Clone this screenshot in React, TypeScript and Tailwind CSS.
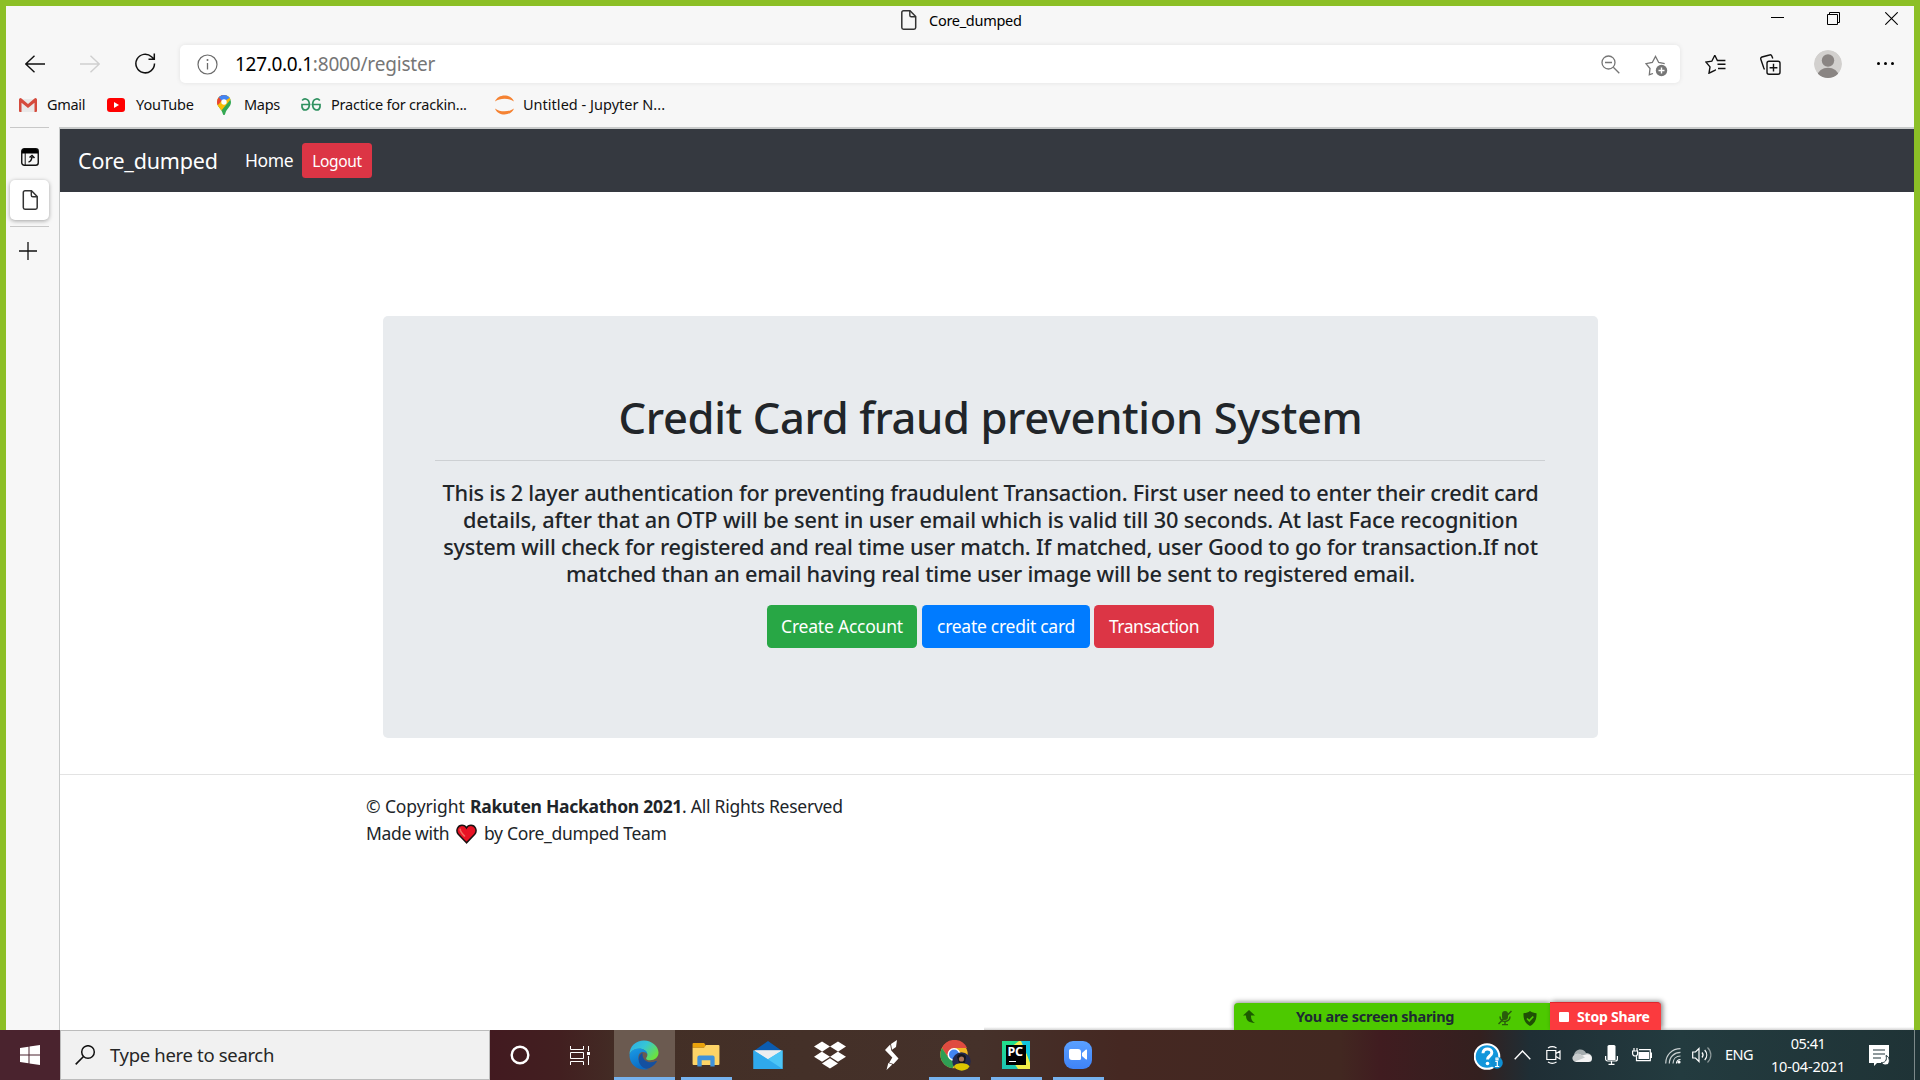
import { ReactNode } from "react";
import { FaDropbox } from "react-icons/fa";

function Svg({ w, h, box, className, children }: { w: number; h: number; box?: string; className?: string; children: ReactNode }) {
  return (
    <svg width={w} height={h} viewBox={box ?? `0 0 ${w} ${h}`} fill="none" className={`block shrink-0 ${className ?? ""}`}>
      {children}
    </svg>
  );
}

function PageIcon({ w, h }: { w: number; h: number }) {
  return (
    <Svg w={w} h={h} box="0 0 16 20">
      <path d="M3 .8h6.500L15.200 6.500V17.500a1.700 1.700 0 0 1-1.700 1.700H3a1.700 1.700 0 0 1-1.700-1.700v-15A1.700 1.700 0 0 1 3 .8Z" stroke="#333" strokeWidth="1.500" />
      <path d="M9.300 1v4.200a1.500 1.500 0 0 0 1.500 1.500H15" stroke="#333" strokeWidth="1.400" />
    </Svg>
  );
}

function TitleBar() {
  return (
    <div className="flex h-[39px] items-start">
      <div className="ml-[894px] mt-1 flex items-center">
        <PageIcon w={17} h={20} />
        <span className="ml-3 -mt-px text-[14.5px] leading-5 tracking-[-0.28px] text-black">Core_dumped</span>
      </div>
      <div className="ml-auto mr-4 mt-[6px] flex items-start">
        <div className="mt-[5px] h-px w-[13px] bg-black" />
        <Svg w={13} h={13} className="ml-[43px]">
          <path d="M.5 2.500h10v10H.5zM2.500 2.500V.5h10v10h-2" stroke="#000" />
        </Svg>
        <Svg w={13} h={13} className="ml-[45px]">
          <path d="M.3.3 12.700 12.700M12.700.3.3 12.700" stroke="#000" strokeWidth="1.100" />
        </Svg>
      </div>
    </div>
  );
}

function AddressRow() {
  return (
    <div className="flex h-[38px] items-center">
      <Svg w={20} h={18} className="-mt-px ml-[19px]">
        <path d="M9.500.8.800 9l8.700 8.200M.8 9H20" stroke="#111" strokeWidth="1.400" />
      </Svg>
      <Svg w={20} h={18} className="-mt-px ml-[35px]">
        <path d="m10.500.8 8.700 8.200-8.700 8.200M19.200 9H0" stroke="#cfcfcf" strokeWidth="1.400" />
      </Svg>
      <Svg w={21} h={21} className="-mt-px ml-[35px]">
        <path d="M19.500 10.500a9.300 9.300 0 1 1-3-6.800L19 6M19.300.5v5.800h-5.800" stroke="#111" strokeWidth="1.500" />
      </Svg>
      <div className="ml-6 flex h-[38px] w-[1500px] items-center rounded-[5px] bg-white shadow-[0_0_5px_rgba(0,0,0,0.09)]">
        <Svg w={21} h={21} className="ml-[17px]">
          <circle cx="10.500" cy="10.500" r="9.500" stroke="#6b6b6b" strokeWidth="1.200" />
          <path d="M10.500 9v6.500" stroke="#6b6b6b" strokeWidth="1.300" />
          <circle cx="10.500" cy="6" r="1" fill="#6b6b6b" />
        </Svg>
        <div className="ml-[17px] text-[19px] leading-6">
          <span className="tracking-[-0.3px] text-black">127.0.0.1</span>
          <span className="tracking-[-0.18px] text-[#767676]">:8000/register</span>
        </div>
        <Svg w={19} h={19} className="ml-auto">
          <circle cx="7.500" cy="7.500" r="6.500" stroke="#767676" strokeWidth="1.300" />
          <path d="m12.300 12.300 6 6M4 7.500h7" stroke="#767676" strokeWidth="1.300" />
        </Svg>
        <Svg w={23} h={22} className="ml-[25px] mr-3 mt-1">
          <path d="M8 18.500 4.300 19.700 5 13.500 1 8.700 7.300 7.500 10.500 1.500l3.200 6 6 1.200" stroke="#767676" strokeWidth="1.300" />
          <circle cx="16.500" cy="15.500" r="5.700" fill="#767676" />
          <path d="M16.500 12.500v6M13.500 15.500h6" stroke="#fff" strokeWidth="1.400" />
        </Svg>
      </div>
      <Svg w={21} h={20} className="ml-[25px]">
        <path d="m9.800 1.200-3 6-5.800.9 4 4.800-1 6.300 5.800-2.900 1-.6M9.800 1.200l2.600 5.300h8M12.500 10.300h8M13 14.500h7.500" stroke="#111" strokeWidth="1.400" />
      </Svg>
      <Svg w={21} h={21} className="ml-[34px]">
        <rect x="7" y="7.200" width="13" height="13" rx="2" stroke="#111" strokeWidth="1.400" />
        <path d="M13.500 9.800v7.800M9.600 13.700h7.800M4.500 15.500 3.800 14 .8 5.300A1.800 1.800 0 0 1 2 3L9.500 1a1.800 1.800 0 0 1 2.300 1l1 2.500" stroke="#111" strokeWidth="1.400" />
      </Svg>
      <Svg w={28} h={28} className="ml-[33px]">
        <clipPath id="avatar"><circle cx="14" cy="14" r="14" /></clipPath>
        <g clipPath="url(#avatar)">
          <circle cx="14" cy="14" r="14" fill="#d2d0ce" />
          <circle cx="14" cy="10.500" r="6.200" fill="#8a8583" />
          <ellipse cx="14" cy="25.500" rx="10.300" ry="7.800" fill="#8a8583" />
        </g>
      </Svg>
      <div className="-mt-px ml-[35px] flex gap-1">
        <i className="size-[3px] rounded-full bg-black" />
        <i className="size-[3px] rounded-full bg-black" />
        <i className="size-[3px] rounded-full bg-black" />
      </div>
    </div>
  );
}

function BookmarkBar() {
  return (
    <div className="flex h-11 items-center pb-px text-[14.5px] text-[#111]">
      <Svg w={18} h={14} className="ml-[13px]">
        <path d="M2 1h14v13H2z" fill="#e9e9e9" />
        <path d="M0 1.500A1.500 1.500 0 0 1 2.500.5L9 6 15.500.5A1.500 1.500 0 0 1 18 1.500V13a1 1 0 0 1-1 1h-1.500V4.800L9 10 2.500 4.800V14H1a1 1 0 0 1-1-1Z" fill="#d54b3d" />
      </Svg>
      <span className="ml-[10px] w-[60px] tracking-[-0.3px]">Gmail</span>
      <Svg w={18} h={14}>
        <rect width="18" height="14" rx="3" fill="#f00" />
        <path d="m7 4 5 3-5 3Z" fill="#fff" />
      </Svg>
      <span className="ml-[11px] w-[81px] tracking-[-0.1px]">YouTube</span>
      <Svg w={14} h={20} className="mt-px">
        <clipPath id="pin"><path d="M7 0a7 7 0 0 1 7 7c0 5-4.500 6.500-5.700 11.500-.5 2-2.100 2-2.600 0C4.500 13.500 0 12 0 7a7 7 0 0 1 7-7Z" /></clipPath>
        <g clipPath="url(#pin)">
          <path d="M0 0h14v20H0z" fill="#34a853" />
          <path d="M0 0h14v4L4 16 0 12Z" fill="#fbbc04" />
          <path d="M0 0h9L1.500 9.500 0 10Z" fill="#ea4335" />
          <path d="M1.500 2 6 7l8-5V0H2Z" fill="#4285f4" />
        </g>
        <circle cx="7" cy="7" r="2.700" fill="#fff" />
      </Svg>
      <span className="ml-[13px] w-[57px] tracking-[-0.3px]">Maps</span>
      <Svg w={20} h={13}>
        <path d="M1.200 2.500C3 .2 8.300 0 8.300 6.500c0 6.500-6.300 7-7.300 2.500V6.500h8.500M18.800 2.500C17 .2 11.700 0 11.700 6.500c0 6.500 6.300 7 7.300 2.500V6.500h-8.500" stroke="#2f9160" strokeWidth="1.700" />
      </Svg>
      <span className="ml-[10px] w-[164px] tracking-[-0.22px]">Practice for crackin...</span>
      <Svg w={19} h={20}>
        <path d="M0 6.500C3-1.500 16-1.500 19 6.500 14 2.700 5 2.700 0 6.500ZM0 13.500c3 8 16 8 19 0-5 3.800-14 3.800-19 0Z" fill="#f58232" />
      </Svg>
      <span className="ml-[9px] tracking-[0.02px]">Untitled - Jupyter N...</span>
    </div>
  );
}

function TabStrip() {
  return (
    <aside className="flex w-[53px] flex-col items-start bg-[#f7f7f7] pl-1">
      <div className="h-px w-[39px] bg-[#c8c8c8]" />
      <Svg w={18} h={18} className="ml-[11px] mt-5">
        <rect x=".75" y=".75" width="16.500" height="16.500" rx="2.500" stroke="#111" strokeWidth="1.400" />
        <path d="M1 3a2 2 0 0 1 2-2h12a2 2 0 0 1 2 2v2.500H1Z" fill="#000" />
        <path d="M4.200 5v12" stroke="#111" />
        <path d="M7.500 14c1.800-.3 3-1.500 3.500-5M8.500 9.500 11 7.500l2.500 2.500" stroke="#111" strokeWidth="1.600" />
      </Svg>
      <div className="mt-[14px] flex h-10 w-[39px] items-center justify-center rounded-[5px] bg-white pl-px shadow-[0_1px_4px_rgba(0,0,0,0.35)]">
        <PageIcon w={16} h={20} />
      </div>
      <div className="mt-[6px] h-px w-[39px] bg-[#c8c8c8]" />
      <Svg w={18} h={18} className="ml-[9px] mt-[15px]">
        <path d="M9 0v18M0 9h18" stroke="#111" strokeWidth="1.300" />
      </Svg>
    </aside>
  );
}

function WebPage() {
  return (
    <div className="flex min-w-0 flex-1 flex-col border-l border-t-2 border-[#c9cbcb] bg-white text-[#212529]">
      <nav className="flex h-[63px] shrink-0 items-center bg-[#353940] text-white">
        <span className="ml-[18px] mt-px w-[140px] text-[21.5px] tracking-[-0.2px]">Core_dumped</span>
        <span className="ml-[27px] w-[48px] text-[17.5px] tracking-[-0.35px]">Home</span>
        <button className="ml-[9px] h-[35px] w-[70px] rounded-[3.500px] bg-[#dc3545] pt-[2px] text-[15.5px] tracking-[-0.35px]">Logout</button>
      </nav>
      <section className="ml-[323px] mt-[124px] h-[422px] w-[1215px] shrink-0 rounded-[5px] bg-[#e8ebee] px-[52px] pt-[74px] text-center font-medium">
        <h1 className="text-[43.5px] leading-[54px] tracking-[-0.37px]">Credit Card fraud prevention System</h1>
        <hr className="mb-[18px] mr-px mt-4 border-[#cdd0d3]" />
        <div className="whitespace-nowrap text-[21.75px] leading-[27px] tracking-[-0.23px]">
          <p>This is 2 layer authentication for preventing fraudulent Transaction. First user need to enter their credit card</p>
          <p className="tracking-[-0.16px]">details, after that an OTP will be sent in user email which is valid till 30 seconds. At last Face recognition</p>
          <p>system will check for registered and real time user match. If matched, user Good to go for transaction.If not</p>
          <p>matched than an email having real time user image will be sent to registered email.</p>
        </div>
        <div className="mt-[18px] flex justify-center text-[17.5px] font-normal text-white">
          <button className="h-[43px] w-[150px] rounded-[4.500px] bg-[#28a745] tracking-[-0.22px]">Create Account</button>
          <button className="ml-[5px] h-[43px] w-[168px] rounded-[4.500px] bg-[#007bff] tracking-[-0.27px]">create credit card</button>
          <button className="ml-1 h-[43px] w-[120px] rounded-[4.500px] bg-[#dc3545] tracking-[-0.45px]">Transaction</button>
        </div>
      </section>
      <hr className="mt-9 border-[#e3e3e3]" />
      <footer className="ml-[306px] mt-[18px] whitespace-nowrap text-[17.5px] leading-[27px]">
        <div className="flex">
          <span className="w-[104px] tracking-[-0.1px]">© Copyright</span>
          <strong className="w-[212px] tracking-[-0.28px]">Rakuten Hackathon 2021</strong>
          <span className="tracking-[-0.25px]">. All Rights Reserved</span>
        </div>
        <div className="flex items-center">
          <span className="w-[90px] tracking-[-0.35px]">Made with</span>
          <Svg w={21} h={20}>
            <path d="M10.500 18.800 2.300 10.300C-.8 6.300 2 1.200 6 1.200c2 0 3.600 1 4.500 2.700C11.400 2.200 13 1.200 15 1.200c4 0 6.800 5.100 3.700 9.100Z" fill="#e81224" stroke="#1b1111" strokeWidth="1.500" />
            <path d="M4.200 5.200c-.3 2.400 2.200 4.700 4.300 6.800" stroke="#f2695e" strokeWidth="1.600" strokeLinecap="round" />
          </Svg>
          <span className="ml-[7px] tracking-[-0.31px]">by Core_dumped Team</span>
        </div>
      </footer>
      <div className="ml-auto mt-auto h-[3px] w-[930px] bg-linear-to-b from-transparent to-[#d2d2d2]" />
    </div>
  );
}

function ShareBar() {
  return (
    <div className="absolute left-[1234px] top-[1002px] flex h-7 w-[427px] items-end text-[14.5px] font-bold">
      <div className="flex h-[27px] w-[316px] items-center rounded-tl-[4px] bg-[#4dc900] text-[#1d2a33] shadow-[0_-1px_5px_rgba(0,0,0,0.45)]">
        <Svg w={13} h={13} className="ml-[9px]">
          <path d="M6 0 0 5.500h3c0 4.500 2 7 9 7.500-3-1.500-4-3.500-4-7.500h4Z" fill="#1c5a00" />
        </Svg>
        <span className="ml-10 w-[160px] tracking-[-0.27px]">You are screen sharing</span>
        <Svg w={14} h={16} className="ml-[42px] mt-[3px]">
          <path d="M4 4a3 3 0 0 1 6 0v3a3 3 0 0 1-6 0ZM6.300 11h1.400v3H10v1.200H4V14h2.300Z" fill="#2a5c0c" />
          <path d="M2 6.500C2 13 12 13 12 6.500M13.500 1 .5 14" stroke="#2a5c0c" strokeWidth="1.500" />
        </Svg>
        <Svg w={14} h={15} className="ml-[11px] mt-[3px]">
          <path d="M7 0c2 1.500 4 2 6.500 2.200C13.800 8 12 12.500 7 15 2 12.500.2 8 .5 2.200 3 2 5 1.500 7 0Z" fill="#1f5005" />
          <path d="m4 7.500 2.300 2.300L10.300 5.500" stroke="#4dc900" strokeWidth="1.700" />
        </Svg>
      </div>
      <div className="flex h-7 w-[111px] items-center rounded-tr-[4px] border-t border-[#e0242c] bg-[#fb3a3e] text-white shadow-[2px_-1px_5px_rgba(0,0,0,0.45)]">
        <div className="ml-[9px] size-[10px] rounded-[1px] bg-white" />
        <span className="ml-2 text-[14px] tracking-[-0.2px]">Stop Share</span>
      </div>
    </div>
  );
}

function AppSlot({ width, left, running, active, children }: { width: string; left: string; running?: boolean; active?: boolean; children: ReactNode }) {
  return (
    <div className={`relative flex h-full items-center justify-center pr-px ${width} ${left} ${active ? "bg-[#6b5a50]" : ""}`}>
      {children}
      {running && <div className="absolute inset-x-0 bottom-0 h-[3px] bg-[#76b2ee]" />}
    </div>
  );
}

function Taskbar() {
  return (
    <div className="relative z-10 flex h-[50px] shrink-0 items-center bg-[linear-gradient(90deg,#4a232e_0px,#4a232e_60px,#421a20_490px,#421f20_560px,#432f26_630px,#45312a_980px,#452822_1120px,#422821_1340px,#401c20_1380px,#33201f_1480px,#1f2e35_1530px,#233b3f_1680px,#1f3336_1920px)] text-white">
      <div className="flex w-[60px] justify-center">
        <Svg w={20} h={20}>
          <path d="M0 3 8.500 1.700V9.500H0ZM9.500 1.500 20 0v9.500H9.500ZM0 10.500h8.500v7.800L0 17ZM9.500 10.500H20V20L9.500 18.500Z" fill="#fff" />
        </Svg>
      </div>
      <div className="flex h-[50px] w-[430px] items-center border border-[#bcbcbc] bg-[#f1f1f1] text-[#262626]">
        <Svg w={21} h={20} className="ml-[14px]">
          <circle cx="13" cy="7" r="6.300" stroke="#111" strokeWidth="1.500" />
          <path d="M8.500 11.500.7 19.400" stroke="#111" strokeWidth="1.600" />
        </Svg>
        <span className="ml-[14px] text-[18.5px] tracking-[-0.33px]">Type here to search</span>
      </div>
      <Svg w={20} h={20} className="ml-5">
        <circle cx="10" cy="10" r="8.300" stroke="#fff" strokeWidth="2.400" />
      </Svg>
      <Svg w={20} h={19} className="ml-10">
        <path d="M.5 0v3.500h13V0M.5 19v-3.500h13V19M.5 6.500h13v6H.5zM18.500 0v5M18.500 10v9" stroke="#fff" />
        <path d="M17 6h3v3h-3z" fill="#fff" />
      </Svg>

      <AppSlot width="w-[61px]" left="ml-6" running active>
        <Svg w={30} h={30} box="0 0 30 31">
          <defs>
            <linearGradient id="edgeTop" x1="0" y1="0" x2="1" y2=".6"><stop stopColor="#2ba9e8" /><stop offset=".5" stopColor="#36c5d6" /><stop offset="1" stopColor="#6be33f" /></linearGradient>
            <linearGradient id="edgeSide" x1="0" y1="0" x2=".4" y2="1"><stop stopColor="#1a9be6" /><stop offset="1" stopColor="#0a6cc4" /></linearGradient>
          </defs>
          <path d="M0 15C0 6 7 .5 15 .5S30 6.500 30 13c0 5-4 8-8.500 8-3 0-4.300-1-4.300-2 0-.8 1.500-1.500 1.300-4C18 11 14 9 10 9 5 9 1 12 0 15Z" fill="url(#edgeTop)" />
          <path d="M0 15.500C1 11.500 5 8.800 10 8.800c4.500 0 8.500 2.500 8.500 6.200-1-1.800-2.500-2.500-4.500-2.500-4 0-6 4-4 9s6 8.500 10 8.500C9 32.500 0 26 0 15.500Z" fill="url(#edgeSide)" />
          <path d="M13.500 13C8 16.500 8 24 14 28.500c4 3 10 0 14.200-6 .2-.8-.3-1-1-.7C20.500 25 12.500 22 13.500 13Z" fill="#1450a0" />
        </Svg>
      </AppSlot>
      <AppSlot width="w-[51px]" left="ml-[6px]" running>
        <Svg w={28} h={24} box="0 0 28 25" className="-mt-px">
          <path d="M0 1a1 1 0 0 1 1-1h11l1.500 2v3H0Z" fill="#e9a20c" />
          <path d="M0 5h12l2-3h13a1 1 0 0 1 1 1v19a1 1 0 0 1-1 1H1a1 1 0 0 1-1-1Z" fill="#fdd467" />
          <path d="M5 24.500V15a2 2 0 0 1 2-2h14a2 2 0 0 1 2 2v9.500h-4.500V18h-9v6.500Z" fill="#3f92db" />
        </Svg>
      </AppSlot>
      <AppSlot width="w-[51px]" left="ml-[11px]">
        <Svg w={30} h={28} box="0 0 30 29">
          <path d="M0 10.500 15 0l15 10.500V20H0Z" fill="#0b5cb0" />
          <path d="M1 9.500h28V20H1Z" fill="#eceef0" />
          <path d="M0 9.500 15 19 30 9.500V29H0Z" fill="#3db6f2" />
          <path d="M15 19 30 29V9.500Z" fill="#4cc5f6" />
          <path d="M0 9.500 30 29H0Z" fill="#2fa9ec" />
        </Svg>
      </AppSlot>
      <AppSlot width="w-[51px]" left="ml-[11px]">
        <FaDropbox size={32} />
      </AppSlot>
      <AppSlot width="w-[51px]" left="ml-[11px]">
        <Svg w={14} h={30} className="-mt-px mr-px">
          <path d="M12 0 11 7 7 9.800 6 4ZM5.200 4.500 6.300 10.500 13.500 18.500 8.500 24 4.200 22.700 7.300 17.500 0 10ZM1.500 30 3.300 23l4 1.500Z" fill="#fff" />
        </Svg>
      </AppSlot>
      <AppSlot width="w-[51px]" left="ml-[11px]" running>
        <Svg w={31} h={31} className="ml-[2px]">
          <circle cx="14" cy="14.500" r="13.700" fill="#f0b724" />
          <path d="M14 8H27A13.700 13.700 0 0 0 2 8l6 9Z" fill="#df4b40" />
          <path d="M8 17 2 8a13.700 13.700 0 0 0 10.500 20.200L17 20Z" fill="#2f9e54" />
          <circle cx="14" cy="14.500" r="6.500" fill="#fff" />
          <circle cx="14" cy="14.500" r="5" fill="#4285f4" />
          <circle cx="21.500" cy="21.500" r="9.200" fill="#23284e" />
          <path d="M17 17c1-4 8-4 9 0l-1 6h-6Z" fill="#14151d" />
          <circle cx="21.500" cy="19" r="2.600" fill="#a8735a" />
          <path d="M14 26.500c1-4.500 14-4.500 15.500 0a9.200 9.200 0 0 1-15.500 0Z" fill="#dcc400" />
        </Svg>
      </AppSlot>
      <AppSlot width="w-[51px]" left="ml-[11px]" running>
        <div className="relative size-7">
          <Svg w={28} h={28}>
            <defs>
              <linearGradient id="pycharm" x1="0" y1="0" x2="0" y2="1"><stop stopColor="#22e08a" /><stop offset="1" stopColor="#1cc3b4" /></linearGradient>
            </defs>
            <path d="M0 0h28v28H0z" fill="url(#pycharm)" />
            <path d="M9 6 17 0h3l8 22v6H16l-4-6Z" fill="#f0ee4a" />
            <path d="M19 0h9v20Z" fill="#0fc3dd" />
          </Svg>
          <div className="absolute left-1 top-1 flex size-5 flex-col bg-black pl-[1.500px]">
            <span className="text-[12.5px] font-bold leading-[13px] tracking-[-0.2px] text-white">PC</span>
            <div className="ml-px mt-[3px] h-px w-[7px] bg-white" />
          </div>
        </div>
      </AppSlot>
      <AppSlot width="w-[51px]" left="ml-[11px]" running>
        <div className="-mt-px flex size-7 items-center justify-center rounded-[9px] bg-[linear-gradient(180deg,#5aa0ff,#3f83f8)]">
          <Svg w={18} h={11}>
            <path d="M0 1.500A1.500 1.500 0 0 1 1.500 0H9a3 3 0 0 1 3 3v6.500A1.500 1.500 0 0 1 10.500 11H3a3 3 0 0 1-3-3ZM13 4l4-3.500c.5-.3 1 0 1 .5v9c0 .5-.5.8-1 .5L13 7Z" fill="#fff" />
          </Svg>
        </div>
      </AppSlot>

      <Svg w={29} h={28} className="ml-[370px] mt-1">
        <circle cx="13" cy="13.500" r="12.300" fill="#1296db" stroke="#fff" strokeWidth="2" />
        <path d="M9 10.300c0-6 8.800-5.500 8.800-.6 0 3.300-4.300 3.300-4.300 6.800" stroke="#fff" strokeWidth="3" />
        <circle cx="13.500" cy="20.500" r="1.800" fill="#fff" />
        <circle cx="22.800" cy="19.800" r="6" fill="#0e8fd4" />
        <path d="M21.300 18.500h2v5M21 23.500h4.200M22 15v1.800h2V15Z" stroke="#fff" strokeWidth="1.200" />
      </Svg>
      <Svg w={17} h={10} className="ml-[11px]">
        <path d="M.7 9.200 8.500 1l7.800 8.200" stroke="#fff" strokeWidth="1.400" />
      </Svg>
      <Svg w={15} h={18} className="ml-[15px]">
        <path d="M.8 4.500h9v9h-9zM10 7.500l4-2.500v8l-4-2.500M2 2c2.500-1.600 6-1.600 8.500 0M2 16c2.500 1.600 6 1.600 8.500 0" stroke="#fff" strokeWidth="1.200" />
      </Svg>
      <Svg w={20} h={13} className="ml-[11px]">
        <path d="M2 7C2 3 5 .5 8.500.5 11 .5 13 2 14 4c3 0 6 1.500 6 5H2Z" fill="#a5adaf" />
        <path d="M4 13a4 4 0 0 1-.5-7.500C6 4 8 5 10 6.500L14 5.500c3.500-1 6 1.500 6 4A3.500 3.500 0 0 1 16.500 13Z" fill="#f3f3f3" />
        <path d="M3.500 5.500C6 4 8 5 10 6.500l3 2-10 4C-1 11 0 6.500 3.500 5.500Z" fill="#c8cccd" />
      </Svg>
      <Svg w={13} h={20} className="ml-[13px]">
        <path d="M2.500 1.500A1.500 1.500 0 0 1 4 0h5a1.500 1.500 0 0 1 1.500 1.500V15h-8Z" fill="#fff" />
        <path d="M.6 11v3a2 2 0 0 0 2 2h7.800a2 2 0 0 0 2-2v-3M6.500 16v3.300M3.500 19.400h6" stroke="#fff" strokeWidth="1.200" />
      </Svg>
      <Svg w={20} h={14} className="ml-[14px]">
        <path d="M6.500 4h10.500v7H6.500z" fill="#fff" />
        <path d="M7 1.700h11.300v11H4.500V8.500M18.500 5h1v4.500h-1M2 0v2.500M5 0v2.500M.6 3h5v2.500a2.500 2.500 0 0 1-5 0Z" stroke="#fff" strokeWidth="1.200" />
      </Svg>
      <Svg w={16} h={16} className="ml-[13px] mt-[2px]">
        <path d="M.7 15.500C.7 7 7 .7 15.500.7M4.300 15.500c0-6.500 5-11.200 11.200-11.200M8 15.500C8 11 11 8 15.500 8" stroke="#c9d0d1" strokeWidth="1.200" />
        <path d="M11.500 15.500c0-2 1.500-4 4-4" stroke="#fff" strokeWidth="1.200" />
        <circle cx="14" cy="14" r="1.600" fill="#fff" />
      </Svg>
      <Svg w={20} h={18} className="ml-[11px]">
        <path d="M.7 6h2.800L7 2.500v13L3.500 12H.7Z" stroke="#fff" strokeWidth="1.200" />
        <path d="M10 6.500c1.300 1.500 1.300 3.500 0 5M12.700 4c2.700 3 2.700 7 0 10" stroke="#fff" strokeWidth="1.200" />
        <path d="M15.500 1.500c4.500 4.500 4.500 10.500 0 15" stroke="#8d999a" strokeWidth="1.200" />
      </Svg>
      <span className="ml-[13px] w-7 text-[14.5px] tracking-[-0.5px]">ENG</span>
      <div className="ml-[17px] w-[76px] whitespace-nowrap text-center text-[14.5px] leading-[23px]">
        <div className="tracking-[-0.5px]">05:41</div>
        <div className="tracking-[-0.15px]">10-04-2021</div>
      </div>
      <Svg w={22} h={21} className="ml-[23px]">
        <path d="M0 0h20v18H8l-3 3v-3H0Z" fill="#fff" />
        <path d="M4 5h12M4 9h12M4 13h8" stroke="#20353a" strokeWidth="1.200" />
        <path d="M17 10.500c4 1 5 9 0 9.500-2 .2-4-1-4.500-2.500 3 .5 6-2 4.500-7Z" fill="#fff" stroke="#20353a" />
      </Svg>
      <div className="ml-auto mr-[5px] h-full w-px bg-[#7d898a]" />
    </div>
  );
}

export default function App() {
  return (
    <div className="relative flex h-[1080px] w-[1920px] flex-col overflow-hidden bg-[#f7f7f7] font-['Noto_Sans',sans-serif]">
      <div className="flex h-[1030px] flex-col border-x-[6px] border-t-[6px] border-[#8cbf26]">
        <TitleBar />
        <AddressRow />
        <BookmarkBar />
        <div className="flex min-h-0 flex-1">
          <TabStrip />
          <WebPage />
        </div>
      </div>
      <Taskbar />
      <ShareBar />
    </div>
  );
}
